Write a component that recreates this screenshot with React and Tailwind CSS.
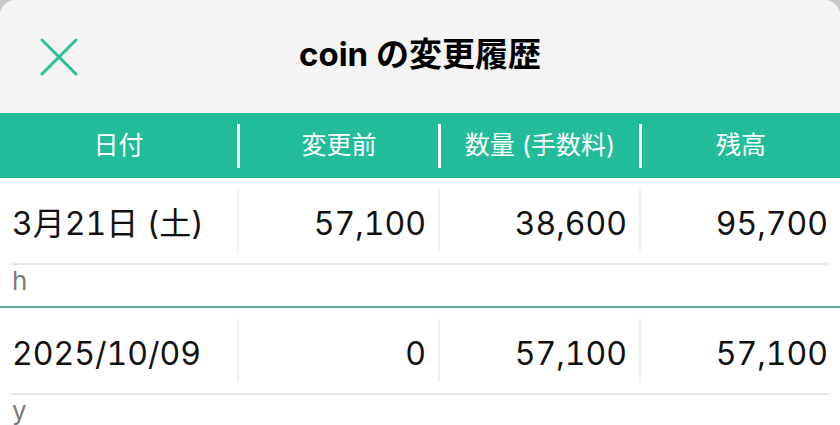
const rows = [
  { date: '3月21日 (土)', before: '57,100', amount: '38,600', balance: '95,700', note: 'h' },
  { date: '2025/10/09', before: '0', amount: '57,100', balance: '57,100', note: 'y' },
]

const font = { fontFamily: 'Inter, "Noto Sans CJK JP", sans-serif' }

function HeadDivider() {
  return <div className="w-[3px] h-[44px] bg-white shrink-0" />
}

function CellDivider() {
  return <div className="w-[2px] h-[63px] bg-[#f1f1f3] shrink-0" />
}

export default function App() {
  return (
    <div className="w-[840px] h-[425px] overflow-hidden bg-[#c9c9cb]" style={font}>
      <div className="rounded-t-[16px] overflow-hidden bg-white h-full">
        <div className="h-[113px] bg-[#f5f4f5] grid grid-cols-[1fr_auto_1fr] items-center">
          <div className="pl-[40px]">
            <svg width="38" height="38" viewBox="0 0 38 38" fill="none" stroke="#2bbf9b" strokeWidth="3" strokeLinecap="round">
              <path d="M2 2L36 36M36 2L2 36" />
            </svg>
          </div>
          <h1 className="text-[33px] font-bold text-black pb-[4px]">coin の変更履歴</h1>
          <div />
        </div>

        <div className="h-[65px] bg-[#22bc9b] flex items-center text-white text-[25px]">
          <div className="w-[237px] text-center">日付</div>
          <HeadDivider />
          <div className="w-[198px] text-center">変更前</div>
          <HeadDivider />
          <div className="w-[198px] text-center">数量 (手数料)</div>
          <HeadDivider />
          <div className="flex-1 text-center">残高</div>
        </div>

        {rows.map((r, i) => (
          <div key={i}>
            <div className="h-[85px] flex items-center text-[32px] text-[#111] tabular-nums">
              <div className="w-[237px] pl-[12px] pt-[7px] whitespace-nowrap">{r.date}</div>
              <CellDivider />
              <div className="w-[199px] text-right pr-[12px] pt-[7px]">{r.before}</div>
              <CellDivider />
              <div className="w-[199px] text-right pr-[12px] pt-[7px]">{r.amount}</div>
              <CellDivider />
              <div className="flex-1 text-right pr-[12px] pt-[7px]">{r.balance}</div>
            </div>
            <div className="mx-[11px] h-[2px] bg-[#e6e6ea]" />
            <div className="h-[41px] pl-[12px] text-[26px] text-[#7b7b7b] leading-[32px]">{r.note}</div>
            <div className="h-[2px] bg-[#5aaa94]" />
          </div>
        ))}
      </div>
    </div>
  )
}
